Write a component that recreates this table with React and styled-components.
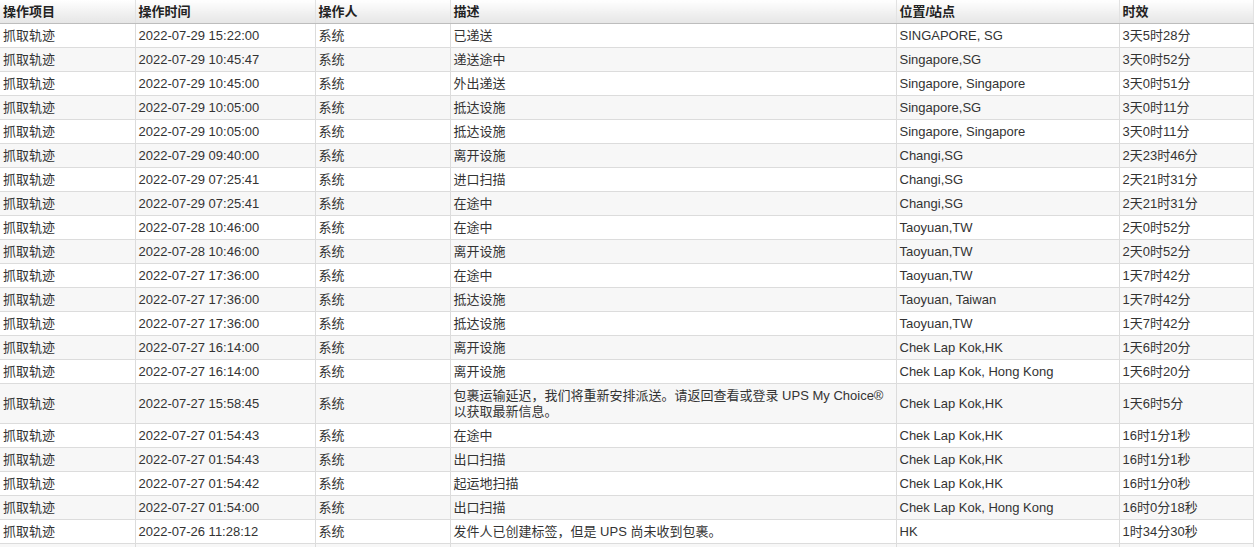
import React from 'react';
import styled, { createGlobalStyle } from 'styled-components';

const GlobalStyle = createGlobalStyle`
    html, body {
        margin: 0;
        padding: 0;
        background: #fff;
    }
    body {
        font-family: "Liberation Sans", Arial, "Noto Sans CJK SC", sans-serif;
        font-size: 13px;
        color: #333;
    }
`;

const Table = styled.table`
    width: 1253px;
    border-collapse: collapse;
    table-layout: fixed;
`;

const HeadCell = styled.th`
    height: 23px;
    padding: 0 3px;
    text-align: left;
    font-weight: bold;
    color: #222;
    line-height: 16px;
    background: linear-gradient(to bottom, #ffffff 0%, #f1f1f1 55%, #e6e6e6 100%);
    border-bottom: 1px solid #bdbdbd;
    border-left: 1px solid #e2e2e2;
    border-right: 1px solid #e2e2e2;
    &:first-child {
        border-left: none;
    }
`;

const Row = styled.tr`
    background: ${({ $striped }) => ($striped ? '#f7f7f7' : '#ffffff')};
`;

const Cell = styled.td`
    height: 16px;
    padding: 4px 3px 3px;
    line-height: 16px;
    vertical-align: middle;
    border-bottom: 1px solid #dcdcdc;
    border-left: 1px solid #dcdcdc;
    border-right: 1px solid #dcdcdc;
    white-space: ${({ $wrap }) => ($wrap ? 'normal' : 'nowrap')};
    overflow: hidden;
    &:first-child {
        border-left: none;
    }
`;

const columns = [
    { title: '操作项目', w: 135 },
    { title: '操作时间', w: 180 },
    { title: '操作人', w: 135 },
    { title: '描述', w: 446 },
    { title: '位置/站点', w: 223 },
    { title: '时效', w: 134 },
];

const rows = [
    ['2022-07-29 15:22:00', '已递送', 'SINGAPORE, SG', '3天5时28分'],
    ['2022-07-29 10:45:47', '递送途中', 'Singapore,SG', '3天0时52分'],
    ['2022-07-29 10:45:00', '外出递送', 'Singapore, Singapore', '3天0时51分'],
    ['2022-07-29 10:05:00', '抵达设施', 'Singapore,SG', '3天0时11分'],
    ['2022-07-29 10:05:00', '抵达设施', 'Singapore, Singapore', '3天0时11分'],
    ['2022-07-29 09:40:00', '离开设施', 'Changi,SG', '2天23时46分'],
    ['2022-07-29 07:25:41', '进口扫描', 'Changi,SG', '2天21时31分'],
    ['2022-07-29 07:25:41', '在途中', 'Changi,SG', '2天21时31分'],
    ['2022-07-28 10:46:00', '在途中', 'Taoyuan,TW', '2天0时52分'],
    ['2022-07-28 10:46:00', '离开设施', 'Taoyuan,TW', '2天0时52分'],
    ['2022-07-27 17:36:00', '在途中', 'Taoyuan,TW', '1天7时42分'],
    ['2022-07-27 17:36:00', '抵达设施', 'Taoyuan, Taiwan', '1天7时42分'],
    ['2022-07-27 17:36:00', '抵达设施', 'Taoyuan,TW', '1天7时42分'],
    ['2022-07-27 16:14:00', '离开设施', 'Chek Lap Kok,HK', '1天6时20分'],
    ['2022-07-27 16:14:00', '离开设施', 'Chek Lap Kok, Hong Kong', '1天6时20分'],
    [
        '2022-07-27 15:58:45',
        '包裹运输延迟，我们将重新安排派送。请返回查看或登录 UPS My Choice® 以获取最新信息。',
        'Chek Lap Kok,HK',
        '1天6时5分',
    ],
    ['2022-07-27 01:54:43', '在途中', 'Chek Lap Kok,HK', '16时1分1秒'],
    ['2022-07-27 01:54:43', '出口扫描', 'Chek Lap Kok,HK', '16时1分1秒'],
    ['2022-07-27 01:54:42', '起运地扫描', 'Chek Lap Kok,HK', '16时1分0秒'],
    ['2022-07-27 01:54:00', '出口扫描', 'Chek Lap Kok, Hong Kong', '16时0分18秒'],
    ['2022-07-26 11:28:12', '发件人已创建标签，但是 UPS 尚未收到包裹。', 'HK', '1时34分30秒'],
];

const App = () => (
    <>
        <GlobalStyle />
        <Table>
            <colgroup>
                {columns.map((c) => (
                    <col key={c.title} style={{ width: c.w }} />
                ))}
            </colgroup>
            <thead>
                <tr>
                    {columns.map((c) => (
                        <HeadCell key={c.title}>{c.title}</HeadCell>
                    ))}
                </tr>
            </thead>
            <tbody>
                {rows.map(([time, desc, place, span], i) => (
                    <Row key={i} $striped={i % 2 === 1}>
                        <Cell>抓取轨迹</Cell>
                        <Cell>{time}</Cell>
                        <Cell>系统</Cell>
                        <Cell $wrap>{desc}</Cell>
                        <Cell>{place}</Cell>
                        <Cell>{span}</Cell>
                    </Row>
                ))}
                <Row $striped>
                    {columns.map((c) => (
                        <Cell key={c.title} />
                    ))}
                </Row>
            </tbody>
        </Table>
    </>
);

export default App;
